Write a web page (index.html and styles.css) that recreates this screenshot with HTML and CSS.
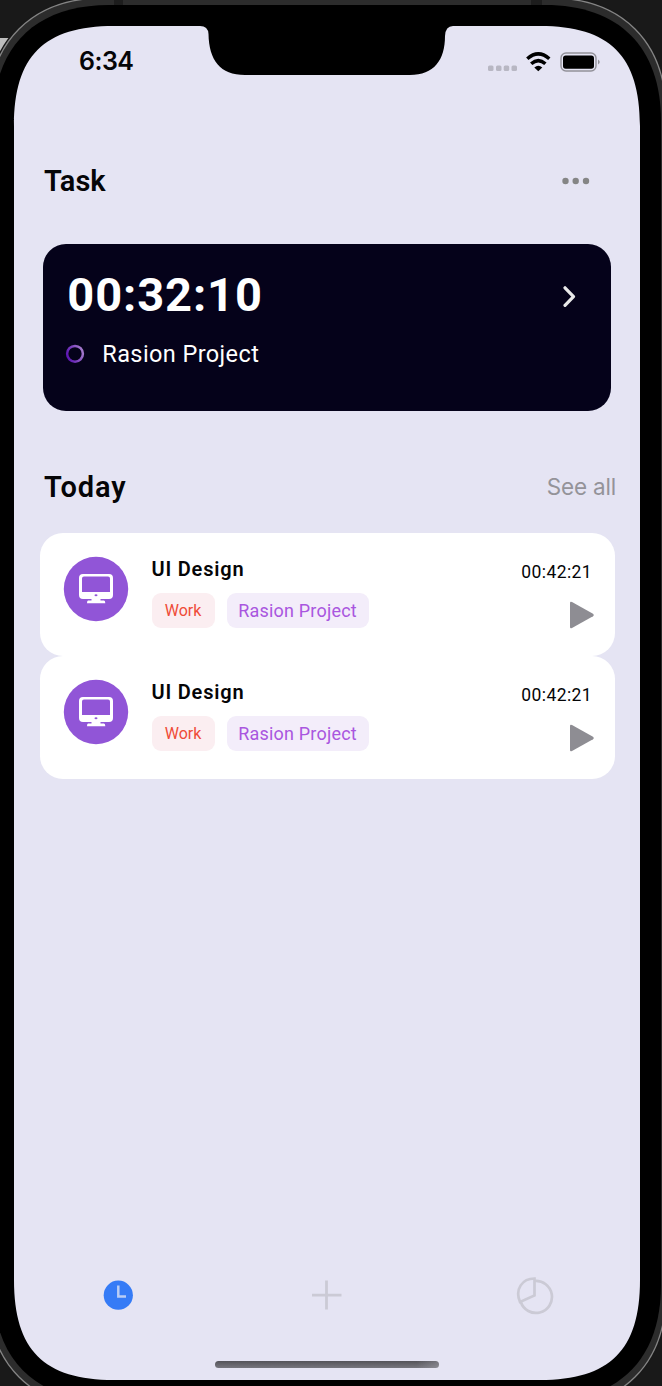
FILE: index.html
```html
<!DOCTYPE html>
<html lang="en">
<head>
<meta charset="utf-8">
<title>Task</title>
<link rel="stylesheet" href="styles.css">
</head>
<body>
<div class="phone">
  <svg class="frame" viewBox="0 0 662 1386" aria-hidden="true">
    <rect width="662" height="1386" fill="#191919"/>
    <rect y="38" width="14" height="20" fill="#bdbdbd"/>
    <path d="M-12 114C-12 42 32-2 104-2H550C622-2 666 42 666 114V1292C666 1364 622 1408 550 1408H104C32 1408-12 1364-12 1292Z" fill="#2c2c2c" stroke="#191919" stroke-width="4"/>
    <path d="M-12 114C-12 42 32-2 104-2H550C622-2 666 42 666 114V1292C666 1364 622 1408 550 1408H104C32 1408-12 1364-12 1292Z" fill="#2c2c2c" stroke="#858585" stroke-width="1.300"/>
    <path d="M114 0h9v6h-9zM531 0h11v6h-11z" fill="#1d1d1d"/>
    <path d="M-7 121C-7 47 35 5 109 5H545C619 5 661 47 661 121V1285C661 1359 619 1401 545 1401H109C35 1401-7 1359-7 1285Z" fill="#000"/>
    <path d="M14 126C14 56 44 26 114 26H200Q208 26 208.500 34C209 60 220 75 245 75H410C434 75 445 60 445 36Q445.500 26 453 26H540C610 26 640 56 640 126V1280C640 1350 610 1380 540 1380H114C44 1380 14 1350 14 1280Z" fill="#e5e4f3"/>
  </svg>
  <main class="screen">
    <header class="status">
      <span class="clock">6:34</span>
      <svg class="indicators" viewBox="0 0 112 22" aria-hidden="true">
        <g fill="#b8b7c3"><rect x="0" y="14.500" width="5.500" height="5.500" rx="1.500"/><rect x="8" y="14.500" width="5.500" height="5.500" rx="1.500"/><rect x="15.700" y="14.500" width="5.500" height="5.500" rx="1.500"/><rect x="23.500" y="14.500" width="5.500" height="5.500" rx="1.500"/></g>
        <g fill="none" stroke="#000" stroke-width="3.500"><path d="M39.300 7.800Q50.300-2 61.300 7.800"/><path d="M43.200 12.800Q50.300 6.500 57.400 12.800"/></g>
        <path d="M46.300 16.500Q50.300 13 54.300 16.500L50.300 20.300Z"/>
        <rect x="73" y="2" width="35" height="18" rx="5" fill="none" stroke="#929199" stroke-width="1.400"/>
        <rect x="75" y="4.500" width="31" height="13.200" rx="2.700"/><path d="M110 8.500q3.500 2.500 0 5z" fill="#929199"/>
      </svg>
    </header>
    <div class="heading">
      <h1 class="title title-task">Task</h1>
      <svg class="more" viewBox="0 0 28 8" fill="#858585"><circle cx="3.500" cy="4" r="3.200"/><circle cx="13.700" cy="4" r="3.200"/><circle cx="24" cy="4" r="3.200"/></svg>
    </div>
    <section class="current">
      <div class="current-top">
        <span class="timer">00:32:10</span>
        <svg class="chevron" viewBox="0 0 14 22"><path d="M2 2.800L10.500 11.600L2 20.300" fill="none" stroke="#e9e9e9" stroke-width="3.200" stroke-linecap="round" stroke-linejoin="round"/></svg>
      </div>
      <div class="project">
        <svg class="ring" viewBox="0 0 20 20"><defs><linearGradient id="violet" x1="0" y1=".7" x2="1" y2=".3"><stop stop-color="#5b13b3"/><stop offset="1" stop-color="#a47acb"/></linearGradient></defs><circle cx="10" cy="9.800" r="7.900" fill="none" stroke="url(#violet)" stroke-width="2.500"/></svg>
        <span class="project-name">Rasion Project</span>
      </div>
    </section>
    <div class="heading heading-today">
      <h2 class="title title-today">Today</h2>
      <span class="see-all">See all</span>
    </div>
    <article class="task">
      <svg class="avatar" viewBox="0 0 66 66"><circle cx="33" cy="33" r="32.200" fill="#9155d7"/><path fill="#fff" fill-rule="evenodd" d="M20 18H46Q50 18 50 22V39Q50 43 46 43H37.500V44.500H41Q42.300 44.500 42.300 47.300H24Q24 44.500 25 44.500H28.500V43H20Q16 43 16 39V22Q16 18 20 18ZM21 20.500Q19 20.500 19 22.500V36H47V22.500Q47 20.500 45 20.500Z"/><ellipse cx="33" cy="39.300" rx="1.500" ry="1" fill="#9155d7"/></svg>
      <div class="details">
        <h3 class="name">UI Design</h3>
        <div class="tags"><span class="tag work">Work</span><span class="tag rasion">Rasion Project</span></div>
      </div>
      <div class="side"><span class="time">00:42:21</span>
        <svg class="play" viewBox="0 0 24 28"><path d="M0 2Q0 0 2 1L23 12.700Q24.500 14 23 15.300L2 27Q0 28 0 26Z" fill="#8e8d93"/></svg></div>
    </article>
    <article class="task">
      <svg class="avatar" viewBox="0 0 66 66"><circle cx="33" cy="33" r="32.200" fill="#9155d7"/><path fill="#fff" fill-rule="evenodd" d="M20 18H46Q50 18 50 22V39Q50 43 46 43H37.500V44.500H41Q42.300 44.500 42.300 47.300H24Q24 44.500 25 44.500H28.500V43H20Q16 43 16 39V22Q16 18 20 18ZM21 20.500Q19 20.500 19 22.500V36H47V22.500Q47 20.500 45 20.500Z"/><ellipse cx="33" cy="39.300" rx="1.500" ry="1" fill="#9155d7"/></svg>
      <div class="details">
        <h3 class="name">UI Design</h3>
        <div class="tags"><span class="tag work">Work</span><span class="tag rasion">Rasion Project</span></div>
      </div>
      <div class="side"><span class="time">00:42:21</span>
        <svg class="play" viewBox="0 0 24 28"><path d="M0 2Q0 0 2 1L23 12.700Q24.500 14 23 15.300L2 27Q0 28 0 26Z" fill="#8e8d93"/></svg></div>
    </article>
    <nav class="tabs">
      <svg class="tab" viewBox="0 0 40 40"><circle cx="20.300" cy="20.200" r="14.600" fill="#357bf6"/><path d="M20.300 10.500V21.500H28" fill="none" stroke="#b9cdf5" stroke-width="2.500"/></svg>
      <svg class="tab" viewBox="0 0 40 40"><path d="M19.500 5.500V34.500M5 20.200H34.500" fill="none" stroke="#cbcad5" stroke-width="2.800"/></svg>
      <svg class="tab" viewBox="0 0 40 40" fill="none" stroke="#cbcad5" stroke-width="2.700"><path d="M19.500 3.500V20.500L5 27C-.5 14 7.500 3.500 19.500 3.500Z"/><path d="M19.500 6A16 16 0 1 1 5.800 27"/></svg>
    </nav>
    <div class="home-bar"></div>
  </main>
</div>
</body>
</html>
```

FILE: styles.css
```css
* { box-sizing: border-box; }
body { margin: 0; background: #191919; font-family: Roboto, "Liberation Sans", sans-serif; color: #050507; }
svg { display: block; flex: none; }
.phone { position: relative; width: 662px; height: 1386px; overflow: hidden; }
.frame { position: absolute; inset: 0; width: 662px; height: 1386px; }
.screen { position: relative; display: flex; flex-direction: column; margin-left: 14px; width: 626px; height: 1380px; padding-top: 45px; }
.status { display: flex; justify-content: space-between; align-items: center; height: 33px; padding: 0 40px 0 65px; }
.clock { font: 600 25px/33px Inter, sans-serif; letter-spacing: -.5px; }
.indicators { width: 112px; height: 22px; }
.heading { display: flex; justify-content: space-between; align-items: center; height: 40px; margin-top: 83px; padding: 0 50px 0 30px; }
.title { margin: 0; font-size: 29px; line-height: 40px; font-weight: 600; }
.title-task { letter-spacing: 0; }
.title-today { letter-spacing: .9px; }
.more { width: 28px; height: 8px; }
.current { width: 567.500px; height: 166.500px; margin: 43px 0 .5px 29.300px; padding: 24px 34px 0 24px; border-radius: 23px; background: #05021a; color: #fff; }
.current-top { display: flex; justify-content: space-between; align-items: center; height: 56px; }
.timer { font-size: 47px; line-height: 54px; height: 56px; font-weight: 700; letter-spacing: .9px; }
.chevron { width: 14px; height: 22px; }
.project { display: flex; align-items: center; gap: 17px; height: 30px; margin-top: 15px; margin-left: -2px; }
.ring { width: 20px; height: 20px; }
.project-name { font-size: 23.500px; line-height: 30px; letter-spacing: .4px; }
.heading-today { margin-top: 56px; padding-right: 24px; }
.see-all { font: 400 22.500px/40px Inter, sans-serif; letter-spacing: -.2px; color: #949399; }
.task { display: flex; width: 575px; height: 123px; margin-left: 26px; padding: 23px 21px 0 23px; border-radius: 23px; background: #fff; }
.heading-today + .task { margin-top: 26px; }
.avatar { width: 66px; height: 66px; }
.details { margin-left: 22.500px; }
.name { margin: 0; font-size: 20px; line-height: 26px; font-weight: 600; letter-spacing: .8px; }
.tags { display: flex; gap: 12px; margin-top: 11px; }
.tag { height: 35px; border-radius: 9px; text-align: center; line-height: 35px; white-space: nowrap; }
.work { width: 63px; background: #fbeef1; color: #ef4c38; font-size: 16px; }
.rasion { width: 142px; background: #f3edfa; color: #a956df; font-size: 18px; line-height: 36px; letter-spacing: .2px; }
.side { display: flex; flex-direction: column; align-items: flex-end; margin-left: auto; }
.time { margin: 4px 2px 0 0; font-size: 17.500px; line-height: 24px; letter-spacing: .4px; color: #050507; }
.play { width: 24px; height: 28px; margin-top: 17px; }
.tabs { display: flex; justify-content: space-between; margin-top: auto; padding: 0 85px 0 84px; }
.tab { width: 40px; height: 40px; }
.home-bar { width: 224px; height: 7px; margin: 46px 0 12px 201px; border-radius: 4px; background: linear-gradient(90deg, transparent 90%, #aaa9b366), linear-gradient(#55545a, #77767e); }
```
